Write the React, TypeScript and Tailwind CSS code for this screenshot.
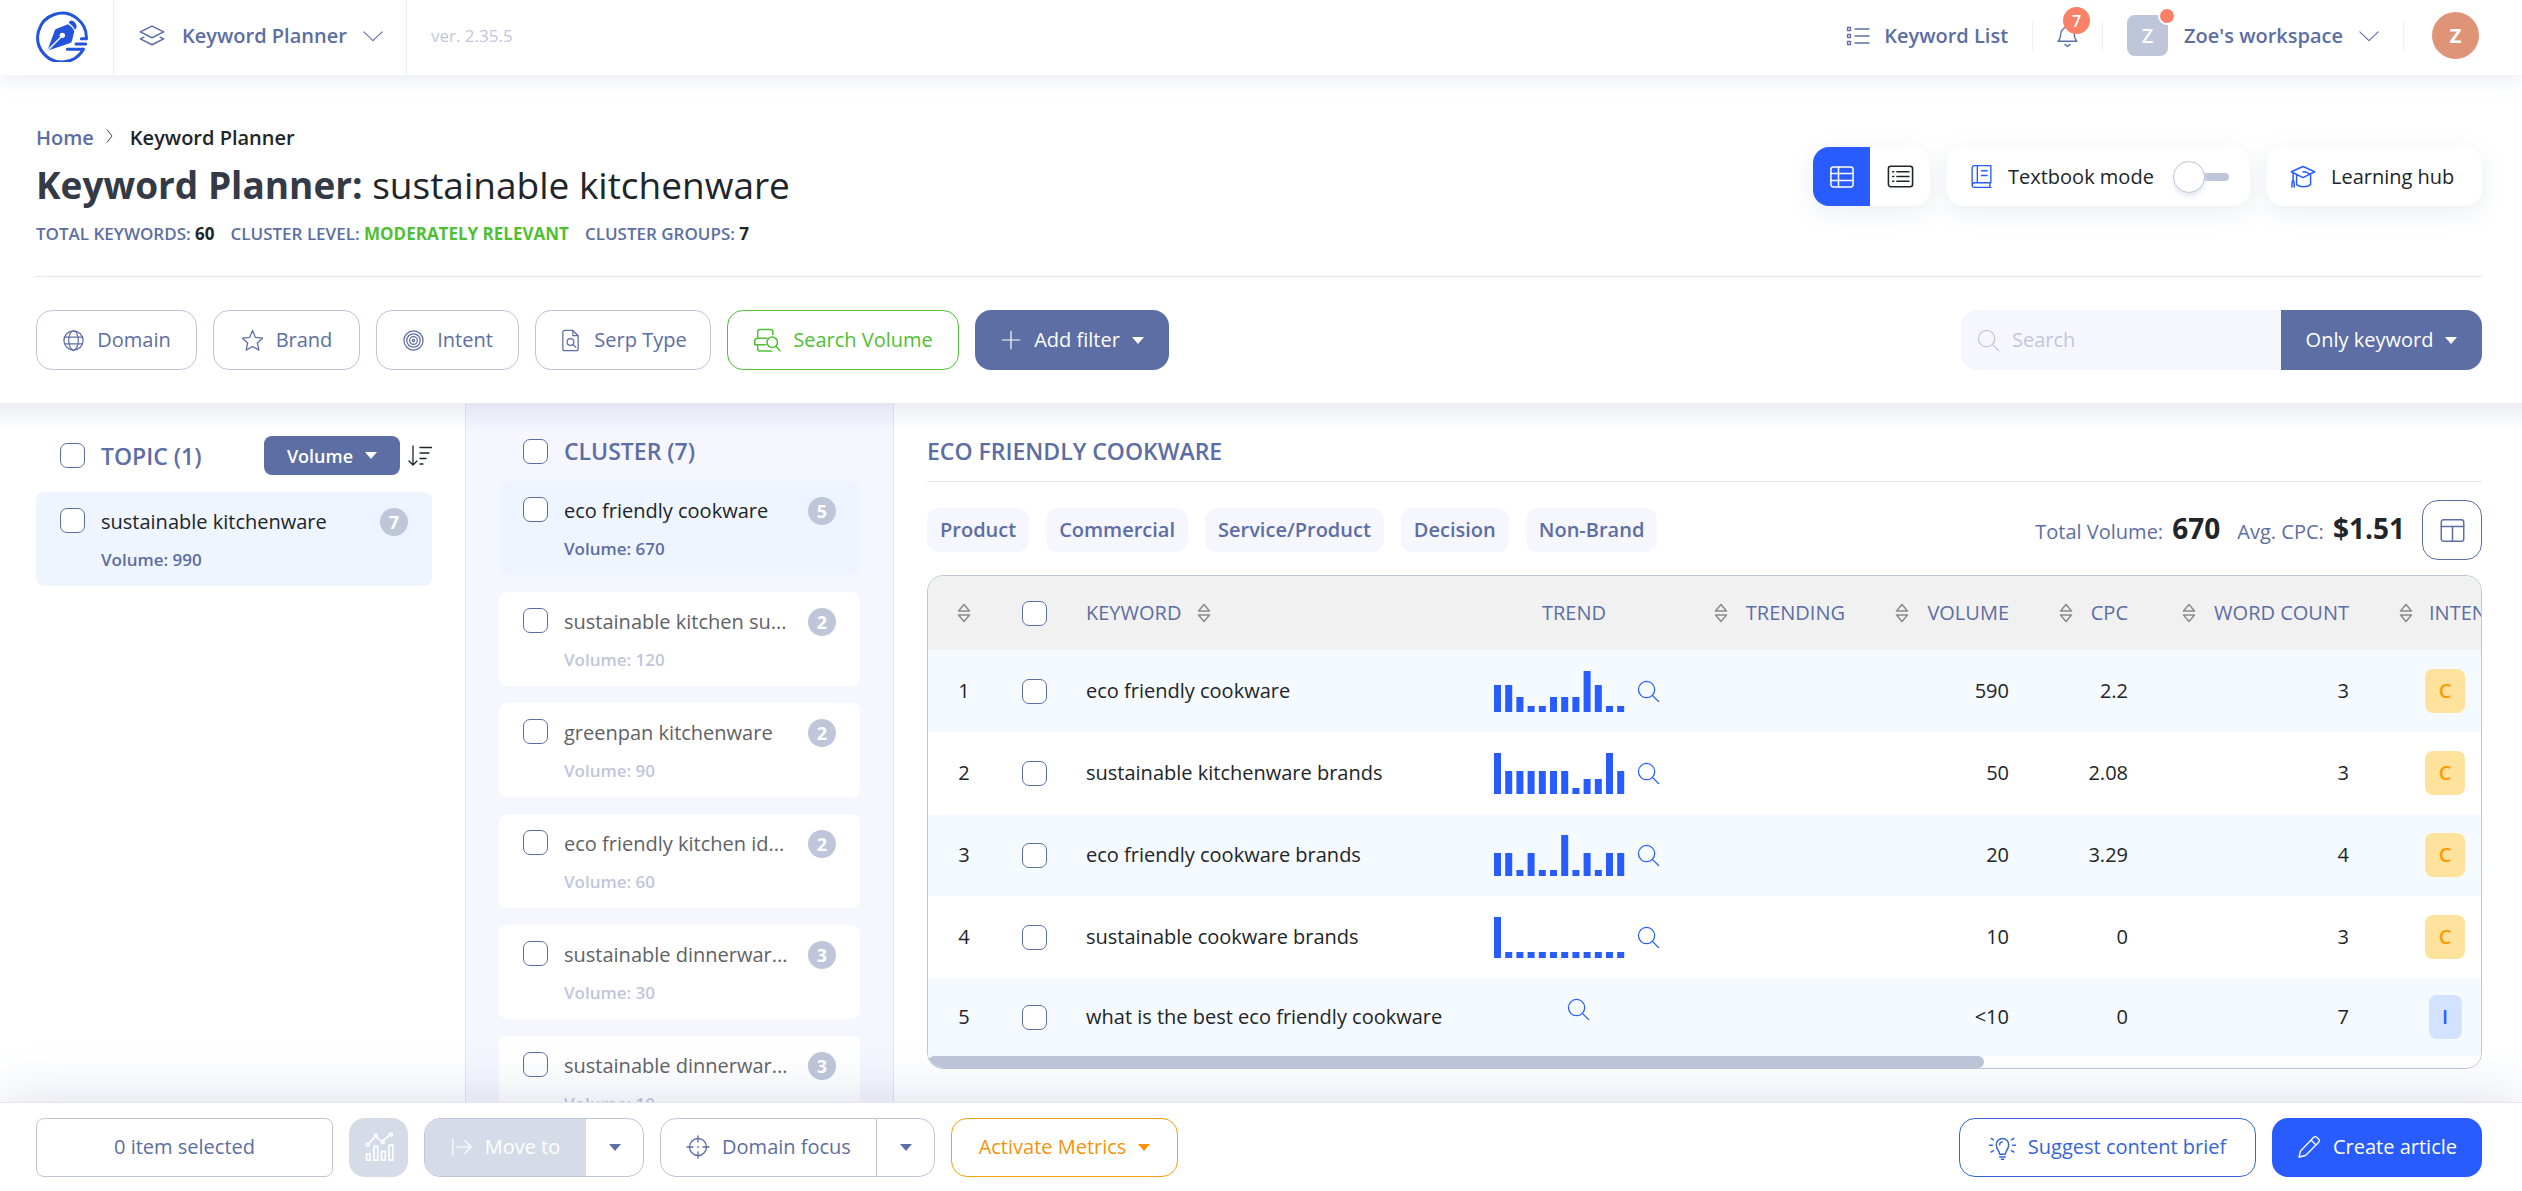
import type { ReactNode } from 'react'
import { clsx } from 'clsx'

const CLUSTERS = [
  { id: 'c1', name: 'eco friendly cookware', count: 5, volume: 670 },
  { id: 'c2', name: 'sustainable kitchen su...', count: 2, volume: 120 },
  { id: 'c3', name: 'greenpan kitchenware', count: 2, volume: 90 },
  { id: 'c4', name: 'eco friendly kitchen id...', count: 2, volume: 60 },
  { id: 'c5', name: 'sustainable dinnerwar...', count: 3, volume: 30 },
  { id: 'c6', name: 'sustainable dinnerwar...', count: 3, volume: 10 },
]

const TAGS = ['Product', 'Commercial', 'Service/Product', 'Decision', 'Non-Brand']

type Row = {
  keyword: string
  trend: number[]
  volume: string
  cpc: string
  words: number
  intent: 'C' | 'I'
}

// trend values are bar heights in px, one per month
const ROWS: Row[] = [
  { keyword: 'eco friendly cookware', trend: [27, 27, 15, 6, 6, 15, 15, 15, 41, 27, 6, 6], volume: '590', cpc: '2.2', words: 3, intent: 'C' },
  { keyword: 'sustainable kitchenware brands', trend: [41, 23, 23, 23, 23, 23, 23, 6, 15, 15, 41, 23], volume: '50', cpc: '2.08', words: 3, intent: 'C' },
  { keyword: 'eco friendly cookware brands', trend: [23, 23, 6, 23, 6, 6, 41, 6, 23, 6, 23, 23], volume: '20', cpc: '3.29', words: 4, intent: 'C' },
  { keyword: 'sustainable cookware brands', trend: [41, 6, 6, 6, 6, 6, 6, 6, 6, 6, 6, 6], volume: '10', cpc: '0', words: 3, intent: 'C' },
  { keyword: 'what is the best eco friendly cookware', trend: [], volume: '<10', cpc: '0', words: 7, intent: 'I' },
]

export default function App() {
  return (
    <div className="flex h-screen min-h-[720px] flex-col overflow-hidden bg-white font-['Open_Sans','Noto_Sans',sans-serif] text-xl leading-7 text-[#212529]">
      <TopBar />
      <PageHead />
      <div className="relative flex min-h-0 flex-1">
        <TopicPanel />
        <ClusterPanel />
        <KeywordPanel />
        <div className="pointer-events-none absolute inset-x-0 top-0 h-7 bg-linear-to-b from-[#5c6ea3]/12 to-transparent" />
      </div>
      <BottomBar />
    </div>
  )
}

/* ---------- header ---------- */

function TopBar() {
  return (
    <header className="relative z-10 flex h-[75px] shrink-0 items-center bg-white pr-[43px] font-semibold text-[#5c6ea3] shadow-[0_4px_20px_rgba(92,110,163,0.14)]">
      <a href="#" aria-label="Dashboard" className="flex h-full w-[114px] items-center border-r border-[#edf1f9] pb-1 pl-9">
        <Logo />
      </a>
      <button className="flex h-full w-[293px] items-center border-r border-[#edf1f9] pb-1 pl-6">
        <Icon size={28}>
          <path d="M12 3.500 22 8.500 12 13.500 2 8.500z" />
          <path d="m5 13-3 1.500 10 5 10-5-3-1.500" />
        </Icon>
        <span className="ml-4">Keyword Planner</span>
        <Chevron className="ml-4" />
      </button>
      <span className="ml-6 pb-1 text-[17px] font-normal text-[#c0c7da]">ver. 2.35.5</span>

      <div className="ml-auto flex items-center pb-1">
        <a href="#" className="flex items-center gap-[14px]">
          <Icon size={24}>
            <path d="M9 5h14M9 12h14M9 19h14" />
            <rect x="1.500" y="3.500" width="3" height="3" />
            <rect x="1.500" y="10.500" width="3" height="3" />
            <rect x="1.500" y="17.500" width="3" height="3" />
          </Icon>
          Keyword List
        </a>
        <span className="ml-6 h-8 w-px bg-[#edf1f9]" />
        <button aria-label="Notifications" className="relative mx-[22px]">
          <Icon size={25}>
            <path d="M3 17.500c2-2 2.500-3 2.500-7a6.500 6.500 0 0 1 13 0c0 4 .5 5 2.500 7zM9.500 20.500l2.500 2 2.500-2" />
          </Icon>
          <span className="absolute -top-4 left-2 flex size-[27px] items-center justify-center rounded-full bg-[#fa8066] text-base font-semibold text-white">
            7
          </span>
        </button>
        <span className="h-8 w-px bg-[#edf1f9]" />
        <button className="ml-6 flex items-center">
          <span className="relative flex size-[41px] items-center justify-center rounded-lg bg-[#bfc6da] text-xl text-white">
            Z
            <span className="absolute -top-2 -right-2 size-[18px] rounded-full border-2 border-white bg-[#fa8066]" />
          </span>
          <span className="ml-4">Zoe's workspace</span>
          <Chevron className="ml-4" />
        </button>
        <span className="ml-6 h-8 w-px bg-[#edf1f9]" />
        <button aria-label="Account" className="ml-7 size-[47px] rounded-full bg-[#df9478] text-xl font-bold text-white">
          Z
        </button>
      </div>
    </header>
  )
}

/* ---------- title and filters ---------- */

function PageHead() {
  return (
    <section className="shrink-0 pr-10 pl-9">
      <div className="flex items-start justify-between pt-[49px]">
        <div>
          <nav className="flex items-center gap-2 font-semibold">
            <a href="#" className="text-[#5c6ea3]">Home</a>
            <Icon size={16} className="-mt-1">
              <path d="m8 3 7 9-7 9" />
            </Icon>
            <span className="ml-1">Keyword Planner</span>
          </nav>
          <h1 className="mt-2 text-[37px] leading-[50px]">
            <strong className="font-bold text-[#343a46]">Keyword Planner:</strong> sustainable kitchenware
          </h1>
          <p className="mt-3 flex gap-4 text-[17px] leading-6 font-semibold text-[#5c6ea3]">
            <span>TOTAL KEYWORDS: <b className="font-bold text-[#212529]">60</b></span>
            <span>CLUSTER LEVEL: <b className="font-bold text-[#50bf35]">MODERATELY RELEVANT</b></span>
            <span>CLUSTER GROUPS: <b className="font-bold text-[#212529]">7</b></span>
          </p>
        </div>
        <div className="mt-[23px] flex gap-[17px]">
          <div className="flex h-[59px] overflow-hidden rounded-2xl bg-white shadow-[0_6px_24px_rgba(92,110,163,0.12)]">
            <button aria-label="Table view" className="flex w-[57px] items-center justify-center bg-[#295cff] text-white">
              <Icon size={28}>
                <rect x="2.500" y="3.500" width="19" height="17" rx="2" />
                <path d="M2.500 9h19M2.500 15h19M9 3.500v17" />
              </Icon>
            </button>
            <button aria-label="List view" className="flex w-[60px] items-center justify-center">
              <Icon size={29}>
                <rect x="2" y="3.500" width="20" height="17" rx="2" />
                <path d="M9 8h10M9 12h10M9 16h10M5.500 8h1M5.500 12h1M5.500 16h1" />
              </Icon>
            </button>
          </div>
          <label className="flex h-[59px] w-[303px] items-center rounded-2xl bg-white pl-[22px] shadow-[0_6px_24px_rgba(92,110,163,0.12)]">
            <Icon size={25} className="text-[#295cff]">
              <path d="M21 22.500H5.500A2.500 2.500 0 0 1 3 20V4a2.500 2.500 0 0 1 2.500-2.500H21V18H5.500A2.500 2.500 0 0 0 3 20.500M8 1.500V18M20 18v4.500M12 6.500h5.500M12 11h5.500" />
            </Icon>
            <span className="ml-[14px]">Textbook mode</span>
            <span className="relative mr-[21px] ml-auto flex h-8 w-[56px] items-center">
              <input type="checkbox" className="ml-auto h-2 w-8 appearance-none rounded-full bg-[#bfc6da]" />
              <span className="absolute left-0 size-8 rounded-full border border-[#bfc6da] bg-white shadow-md shadow-slate-200" />
            </span>
          </label>
          <a href="#" className="flex h-[59px] w-[215px] items-center gap-[14px] rounded-2xl bg-white pl-[22px] shadow-[0_6px_24px_rgba(92,110,163,0.12)]">
            <Icon size={28} className="text-[#295cff]">
              <path d="M2 7.500 12 3l10 4.500L12 12.500zM6.500 10v8.500c3.500 2.500 9 2.500 12 0V10M3.500 8.500v6M2.500 20.500c0-4 .5-6 1-6s1 2 1 6M12 7.500c3 .2 5 1 6 2.500" />
            </Icon>
            Learning hub
          </a>
        </div>
      </div>

      <div className="mt-[30px] flex flex-wrap items-center gap-4 border-t border-[#e3e7f1] pt-[33px] pb-[33px]">
        <FilterButton label="Domain" className="w-[161px]">
          <circle cx="12" cy="12" r="10" />
          <ellipse cx="12" cy="12" rx="5" ry="10" />
          <path d="M2.800 8.500h18.400M2.800 15.500h18.400" />
        </FilterButton>
        <FilterButton label="Brand" className="w-[147px]">
          <path d="m12 1.500 3 7.300 7.500.8-5.500 5 1.700 7.400L12 18.200 5.300 22 7 14.600l-5.500-5 7.500-.8z" />
        </FilterButton>
        <FilterButton label="Intent" className="w-[143px]">
          <circle cx="12" cy="12" r="10" />
          <circle cx="12" cy="12" r="7" />
          <circle cx="12" cy="12" r="4" />
          <circle cx="12" cy="12" r="1.200" />
        </FilterButton>
        <FilterButton label="Serp Type" className="w-[176px]">
          <path d="M14.500 1.500H6a2 2 0 0 0-2 2v17a2 2 0 0 0 2 2h12a2 2 0 0 0 2-2V7zM14.500 1.500V7H20" />
          <circle cx="12" cy="13.500" r="3.500" />
          <path d="m14.500 16 3 3" />
        </FilterButton>
        <FilterButton label="Search Volume" active className="w-[232px]">
          <path d="M4 10V5a2 2 0 0 1 2-2h9a2 2 0 0 1 2 2v2.500M12 10.500H4A2.500 2.500 0 0 0 1.500 13v3M11 16H1.500M4 16v3.500a2 2 0 0 0 2 2h10" />
          <circle cx="16.500" cy="14" r="4.500" />
          <path d="m19.700 17.300 3.300 4" />
        </FilterButton>
        <button className="flex h-[60px] w-[194px] items-center justify-center gap-3 rounded-2xl bg-[#5c6ea3] text-white">
          <Icon size={22}>
            <path d="M12 2.500v19M2.500 12h19" />
          </Icon>
          Add filter
          <Caret />
        </button>

        <div className="ml-auto flex h-[60px] overflow-hidden rounded-2xl">
          <label className="flex w-[320px] items-center gap-3 bg-[#f5f6fe] pl-4 text-[#bfc6da]">
            <SearchIcon size={23} />
            <input
              aria-label="Search"
              placeholder="Search"
              className="w-full bg-transparent outline-none placeholder:text-[#bfc6da]"
            />
          </label>
          <button className="flex w-[201px] items-center justify-center gap-3 bg-[#5c6ea3] text-white">
            Only keyword
            <Caret />
          </button>
        </div>
      </div>
    </section>
  )
}

function FilterButton({
  label,
  active,
  className,
  children,
}: {
  label: string
  active?: boolean
  className: string
  children: ReactNode
}) {
  return (
    <button
      className={clsx(
        'flex h-[60px] items-center justify-center gap-3 rounded-2xl border bg-white',
        active ? 'border-[#50bf35] text-[#50bf35]' : 'border-[#bfc6da] text-[#5c6ea3]',
        className,
      )}
    >
      <Icon size={active ? 28 : 23}>{children}</Icon>
      {label}
    </button>
  )
}

/* ---------- side panels ---------- */

function TopicPanel() {
  return (
    <aside className="w-[465px] shrink-0 pt-[33px] pr-[33px] pl-9">
      <div className="flex items-center pl-6">
        <Check label="Select all topics" />
        <h2 className="ml-4 text-[23px] leading-9 font-semibold text-[#5c6ea3]">TOPIC (1)</h2>
        <button className="ml-auto flex h-[39px] w-[136px] items-center justify-center gap-3 rounded-lg bg-[#5c6ea3] text-lg font-semibold text-white">
          Volume
          <Caret />
        </button>
        <button aria-label="Sort order" className="ml-2">
          <Icon size={24}>
            <path d="M5 2v19M1 17l4 4 4-4M12 3.500h12M12 9h9M12 14.500h6M12 20h3" />
          </Icon>
        </button>
      </div>
      <div className="mt-[17px]">
        <GroupCard name="sustainable kitchenware" count={7} volume={990} active />
      </div>
    </aside>
  )
}

function ClusterPanel() {
  return (
    <aside className="w-[429px] shrink-0 overflow-hidden border-x border-[#e0e6f5] bg-[#f5f6fe] px-[33px] pt-[30px]">
      <div className="flex items-center pl-6">
        <Check label="Select all clusters" />
        <h2 className="ml-4 text-[23px] leading-9 font-semibold text-[#5c6ea3]">CLUSTER (7)</h2>
      </div>
      <div className="mt-3 flex flex-col gap-[17px]">
        {CLUSTERS.map((c, i) => (
          <GroupCard key={c.id} name={c.name} count={c.count} volume={c.volume} active={i === 0} />
        ))}
      </div>
    </aside>
  )
}

function GroupCard({
  name,
  count,
  volume,
  active,
}: {
  name: string
  count: number
  volume: number
  active?: boolean
}) {
  return (
    <div className={clsx('flex h-[94px] items-start rounded-lg px-6 pt-4', active ? 'bg-[#eff5fe]' : 'bg-white')}>
      <Check label={name} />
      <div className="ml-4 min-w-0 flex-1">
        <p className={clsx('whitespace-nowrap', active ? 'text-[#212529]' : 'text-[#5f6266]')}>{name}</p>
        <p className={clsx('mt-3 text-[17px] leading-6 font-semibold', active ? 'text-[#5c6ea3]' : 'text-[#bfc6da]')}>
          Volume: {volume}
        </p>
      </div>
      <span className="flex size-7 shrink-0 items-center justify-center rounded-full bg-[#bfc6da] text-lg font-bold text-white">
        {count}
      </span>
    </div>
  )
}

/* ---------- keyword table ---------- */

function KeywordPanel() {
  return (
    <main className="min-w-0 flex-1 pt-[30px] pr-10 pl-[33px]">
      <h2 className="text-[23px] leading-9 font-semibold text-[#5c6ea3]">ECO FRIENDLY COOKWARE</h2>
      <div className="mt-3 flex items-center gap-[17px] border-t border-[#e3e7f1] pt-[18px]">
        {TAGS.map((t) => (
          <span key={t} className="rounded-xl bg-[#f5f6fe] px-[13px] py-2 font-semibold text-[#5c6ea3]">
            {t}
          </span>
        ))}
        <p className="ml-auto text-[#5c6ea3]">
          Total Volume: <b className="ml-1 text-[28px] font-bold text-[#212529]">670</b>
        </p>
        <p className="text-[#5c6ea3]">
          Avg. CPC: <b className="ml-1 text-[28px] font-bold text-[#212529]">$1.51</b>
        </p>
        <button
          aria-label="Columns"
          className="flex size-[60px] items-center justify-center rounded-2xl border border-[#5c6ea3] text-[#5c6ea3]"
        >
          <Icon size={27}>
            <rect x="2" y="2.500" width="20" height="19" rx="2" />
            <path d="M2 8.500h20M12 8.500v13" />
          </Icon>
        </button>
      </div>

      <div className="mt-[15px] overflow-hidden rounded-2xl border border-[#bfc6da]">
        <table className="w-[1650px] table-fixed border-collapse text-right">
          <colgroup>
            <col className="w-[72px]" />
            <col className="w-[68px]" />
            <col className="w-[393px]" />
            <col className="w-[226px]" />
            <col className="w-[184px]" />
            <col className="w-[164px]" />
            <col className="w-[119px]" />
            <col className="w-[221px]" />
            <col className="w-[203px]" />
          </colgroup>
          <thead className="h-[74px] bg-[#f1f1f1] text-[#5c6ea3] [&_th]:font-normal">
            <tr>
              <th><SortIcon className="mx-auto" /></th>
              <th><Check label="Select all keywords" className="mx-auto" /></th>
              <th>
                <span className="flex items-center gap-4 pl-[18px]">KEYWORD <SortIcon /></span>
              </th>
              <th className="text-center">TREND</th>
              <SortHead>TRENDING</SortHead>
              <SortHead>VOLUME</SortHead>
              <SortHead>CPC</SortHead>
              <SortHead>WORD COUNT</SortHead>
              <th>
                <span className="flex items-center gap-4 pl-6"><SortIcon /> INTENT</span>
              </th>
            </tr>
          </thead>
          <tbody>
            {ROWS.map((r, i) => (
              <tr key={r.keyword} className={clsx(r.trend.length > 0 ? 'h-[82px]' : 'h-[78px]', i % 2 === 0 && 'bg-[#f5fafe]')}>
                <td className="text-center">{i + 1}</td>
                <td><Check label={r.keyword} className="mx-auto" /></td>
                <td className="pl-[18px] text-left whitespace-nowrap">{r.keyword}</td>
                <td>
                  <span className={clsx('flex items-center justify-center gap-3', r.trend.length > 0 ? 'pl-1' : 'pb-4 pl-2')}>
                    {r.trend.length > 0 && <TrendBars values={r.trend} />}
                    <button aria-label="Search trend" className="text-[#295cff]">
                      <SearchIcon size={23} />
                    </button>
                  </span>
                </td>
                <td />
                <td className="pr-[26px]">{r.volume}</td>
                <td className="pr-[26px]">{r.cpc}</td>
                <td className="pr-[26px]">{r.words}</td>
                <td className="pl-[50px] text-left">
                  <span className="flex w-10 justify-center">
                    <span
                      className={clsx(
                        'flex h-11 items-center justify-center rounded-lg font-semibold',
                        r.intent === 'C' ? 'w-10 bg-[#ffe29c] text-[#ff9900]' : 'w-[33px] bg-[#d3e2fe] text-[#295cff]',
                      )}
                    >
                      {r.intent}
                    </span>
                  </span>
                </td>
              </tr>
            ))}
          </tbody>
        </table>
        <div className="h-3 bg-white">
          <div className="h-full w-[68%] rounded-full bg-[#bfc6da]" />
        </div>
      </div>
    </main>
  )
}

function SortHead({ children }: { children: ReactNode }) {
  return (
    <th>
      <span className="flex items-center justify-end gap-[18px] pr-[26px] whitespace-nowrap">
        <SortIcon />
        {children}
      </span>
    </th>
  )
}

function TrendBars({ values }: { values: number[] }) {
  return (
    <svg width="132" height="42" className="fill-[#295cff]" role="img" aria-label="Trend">
      {values.map((v, i) => (
        <rect key={i} x={1 + i * 11.2} y={42 - v} width="7" height={v} />
      ))}
    </svg>
  )
}

/* ---------- bottom bar ---------- */

function BottomBar() {
  return (
    <footer className="relative z-10 flex h-[89px] shrink-0 items-center gap-4 border-t border-[#e0e6f5] bg-white pr-10 pl-9 text-[#5c6ea3] shadow-[0_-8px_50px_rgba(92,110,163,0.18)]">
      <div className="flex h-[59px] w-[297px] items-center justify-center rounded-lg border border-[#bfc6da]">
        0 item selected
      </div>
      <button aria-label="Metrics chart" disabled className="flex size-[59px] items-center justify-center rounded-2xl bg-[#d5dbe7] text-white">
        <Icon size={30}>
          <path d="M2 22.500v-5h3v5zM8 22.500v-11h3v11zM14 22.500v-7h3v7zM20 22.500v-12h3v12z" />
          <path d="m4 9 5-5.500 5.500 4L20.500 2.500" />
          <circle cx="3" cy="10" r="1.200" />
          <circle cx="9.500" cy="3" r="1.200" />
          <circle cx="15" cy="8" r="1.200" />
          <circle cx="21.500" cy="2" r="1.200" />
        </Icon>
      </button>
      <div className="flex h-[59px] overflow-hidden rounded-2xl border border-[#bfc6da]">
        <button disabled className="flex w-[161px] items-center justify-center gap-3 bg-[#d5dbe7] text-white">
          <Icon size={22}>
            <path d="M2 3v18M6 12h16M15 5l7 7-7 7" />
          </Icon>
          Move to
        </button>
        <button aria-label="Move options" className="flex w-[57px] items-center justify-center">
          <Caret />
        </button>
      </div>
      <div className="flex h-[59px] overflow-hidden rounded-2xl border border-[#bfc6da]">
        <button className="flex w-[215px] items-center justify-center gap-3">
          <Icon size={24}>
            <circle cx="12" cy="12" r="8.500" />
            <path d="M12 1v6M12 17v6M1 12h6M17 12h6M12 11.500v1" />
          </Icon>
          Domain focus
        </button>
        <button aria-label="Focus options" className="flex w-[58px] items-center justify-center border-l border-[#bfc6da]">
          <Caret />
        </button>
      </div>
      <button className="flex h-[59px] w-[227px] items-center justify-center gap-3 rounded-2xl border border-[#f5a114] text-[#f5930a]">
        Activate Metrics
        <Caret />
      </button>

      <button className="ml-auto flex h-[59px] w-[297px] items-center justify-center gap-3 rounded-2xl border border-[#3565d8] text-[#3565d8]">
        <Icon size={27}>
          <path d="M9.500 18c0-3-3-4-3-8.500a5.500 5.500 0 0 1 11 0c0 4.500-3 5.500-3 8.500zM9.500 20.500h5M11 22.500h2M9.500 9.500a2.500 2.500 0 0 1 2.500-2.500M.5 10H3M21 10h2.500M2 4l2 1.200M22 4l-2 1.200M2 16l2-1.200M22 16l-2-1.200" />
        </Icon>
        Suggest content brief
      </button>
      <button className="flex h-[59px] w-[210px] items-center justify-center gap-3 rounded-2xl bg-[#295cff] text-white">
        <Icon size={24}>
          <path d="M2 22 3.500 16 16.500 2.500a2.500 2.500 0 0 1 3.500 0l1.500 1.500a2.500 2.500 0 0 1 0 3.500L8.500 20.500zM14 5l5 5" />
        </Icon>
        Create article
      </button>
    </footer>
  )
}

/* ---------- shared bits ---------- */

function Check({ label, className }: { label: string; className?: string }) {
  return (
    <input
      type="checkbox"
      aria-label={label}
      className={clsx('block size-[25px] shrink-0 appearance-none rounded-[7px] border border-[#5c6ea3] bg-white', className)}
    />
  )
}

function Icon({ size, className, children }: { size: number; className?: string; children: ReactNode }) {
  return (
    <svg
      width={size}
      height={size}
      viewBox="0 0 24 24"
      fill="none"
      stroke="currentColor"
      strokeWidth="1.300"
      strokeLinecap="round"
      strokeLinejoin="round"
      className={clsx('shrink-0', className)}
      aria-hidden="true"
    >
      {children}
    </svg>
  )
}

function SearchIcon({ size }: { size: number }) {
  return (
    <Icon size={size}>
      <circle cx="10" cy="10" r="8.500" />
      <path d="m16 16 6.500 6.500" />
    </Icon>
  )
}

function Chevron({ className }: { className?: string }) {
  return (
    <Icon size={20} className={className}>
      <path d="m1 7 11 10.500L23 7" />
    </Icon>
  )
}

function Caret() {
  return (
    <svg width="12" height="7" viewBox="0 0 12 7" fill="currentColor" className="shrink-0" aria-hidden="true">
      <path d="M0 0h12L6 7z" />
    </svg>
  )
}

function SortIcon({ className }: { className?: string }) {
  return (
    <svg
      width="14"
      height="20"
      viewBox="0 0 14 20"
      fill="none"
      stroke="#8b8b8b"
      strokeWidth="1.500"
      strokeLinejoin="round"
      className={clsx('block shrink-0', className)}
      aria-hidden="true"
    >
      <path d="M7 1.500 12.500 8h-11zM7 18.500 12.500 12h-11z" />
    </svg>
  )
}

function Logo() {
  return (
    <svg width="52" height="52" viewBox="0 0 156 156" fill="none" stroke="#2453dc" strokeWidth="9" strokeLinecap="round" aria-hidden="true">
      <path d="M151 86A73 73 0 1 0 142 118" />
      <path d="M136 86h15M120 102h29M94 118h48" />
      <path d="M34 122 56 62q1-5 6-6l34-13q14 8 19 21l-7 28q-2 6-7 8z" fill="#2453dc" stroke="none" />
      <path d="M98 38q4-9 14-5 12 8 9 22l-4 4q-8-14-19-21z" fill="#2453dc" stroke="none" />
      <circle cx="79" cy="76" r="8" fill="#fff" stroke="none" />
      <path d="M36 120 78 78" stroke="#fff" strokeWidth="4" />
    </svg>
  )
}
